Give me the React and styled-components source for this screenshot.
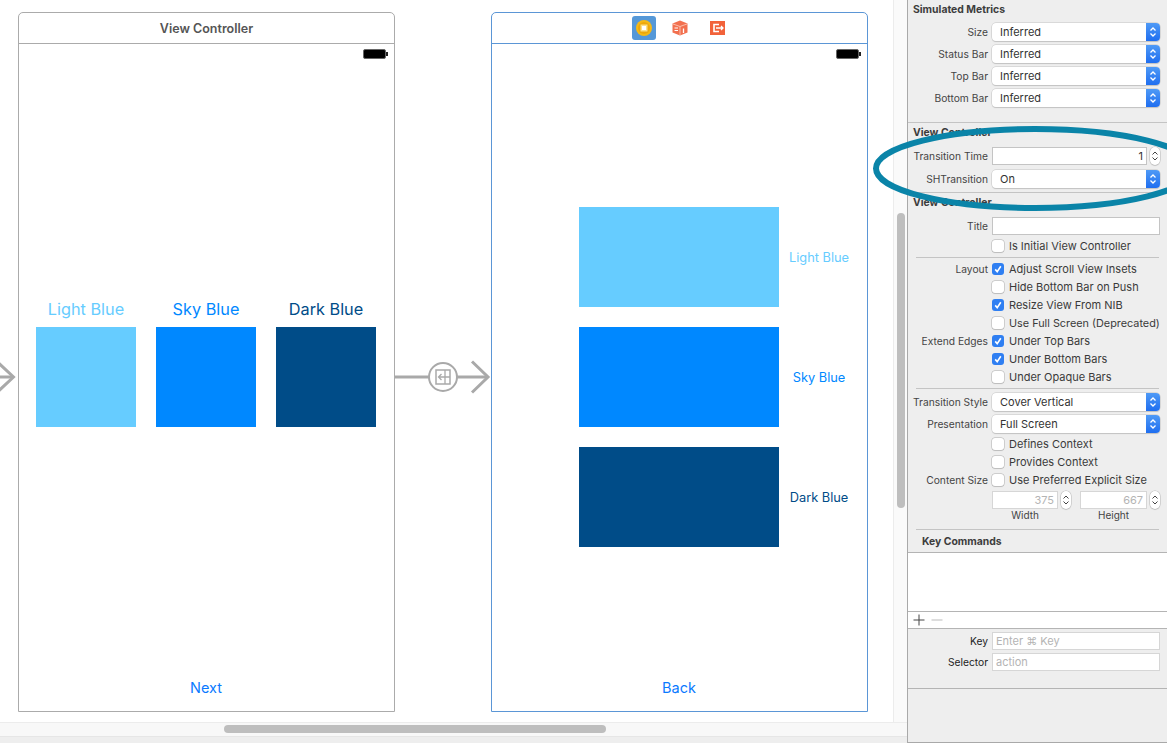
import React from 'react';
import styled, { createGlobalStyle } from 'styled-components';

const Global = createGlobalStyle`
  html, body { margin: 0; padding: 0; background: #fff; overflow: hidden; }
  body { font-family: Inter, "Liberation Sans", sans-serif; }
`;

const Page = styled.div`
  position: relative;
  width: 1167px;
  height: 743px;
  display: flex;
  overflow: hidden;
`;

const Workspace = styled.div`
  width: 907px;
  display: flex;
  flex-direction: column;
`;

const CanvasRow = styled.div`
  display: flex;
  height: 722px;
`;

const Canvas = styled.div`
  width: 893px;
  display: flex;
  align-items: flex-start;
  padding-top: 12px;
  box-sizing: border-box;
  overflow: hidden;
`;

const VScrollTrack = styled.div`
  width: 14px;
  background: #fafafa;
  border-left: 1px solid #ececec;
  padding-top: 213px;
  box-sizing: border-box;
  display: flex;
  justify-content: center;
`;

const VThumb = styled.div`
  width: 8px;
  height: 295px;
  border-radius: 4px;
  background: #bebebe;
`;

const HScrollTrack = styled.div`
  height: 15px;
  background: #f8f8f8;
  border-top: 1px solid #ececec;
  border-bottom: 1px solid #e6e6e6;
  box-sizing: border-box;
  padding: 2px 0 0 224px;
`;

const HThumb = styled.div`
  width: 382px;
  height: 8px;
  border-radius: 4px;
  background: #bebebe;
`;

const BottomStrip = styled.div`
  flex: 1;
  background: #eeeeee;
`;

const EntryArrow = styled.div`
  width: 18px;
  height: 700px;
  display: flex;
  align-items: center;
  padding-top: 30px;
  box-sizing: border-box;
  flex-shrink: 0;
`;

const Scene = styled.div`
  width: 377px;
  height: 700px;
  flex-shrink: 0;
  box-sizing: border-box;
  border: 1px solid ${p => (p.$selected ? '#5b96d6' : '#ababab')};
  border-radius: 5px 5px 0 0;
  display: flex;
  flex-direction: column;
  background: #fff;
`;

const SceneBar = styled.div`
  height: 30px;
  flex-shrink: 0;
  border-bottom: 1px solid ${p => (p.$selected ? '#5b96d6' : '#ababab')};
  display: flex;
  align-items: center;
  justify-content: center;
  gap: 12px;
  font-size: 12.5px;
  font-weight: 600;
  color: #555;
`;

const DockIcon = styled.div`
  width: 24px;
  height: 24px;
  border-radius: 3px;
  display: flex;
  align-items: center;
  justify-content: center;
  background: ${p => (p.$active ? '#5598d8' : 'transparent')};
`;

const StatusRow = styled.div`
  height: 20px;
  display: flex;
  justify-content: flex-end;
  align-items: center;
  padding-right: 7px;
`;

const Battery = styled.div`
  position: relative;
  width: 23px;
  height: 10px;
  box-sizing: border-box;
  border: 1px solid #666;
  border-radius: 2px;
  background: #000;
  margin-right: 1px;
  &::after {
    content: '';
    position: absolute;
    right: -3px;
    top: 2px;
    width: 2px;
    height: 4px;
    background: #222;
  }
`;

const SceneBody = styled.div`
  flex: 1;
  display: flex;
  flex-direction: column;
`;

const SwatchRow = styled.div`
  margin-top: 234px;
  display: flex;
  padding-left: 17px;
  gap: 20px;
`;

const SwatchColumn = styled.div`
  width: 100px;
  display: flex;
  flex-direction: column;
  align-items: center;
  gap: 7px;
`;

const SwatchName = styled.div`
  height: 22px;
  line-height: 22px;
  font-size: 16.3px;
  white-space: nowrap;
  color: ${p => p.$color};
`;

const Swatch = styled.div`
  width: 100px;
  height: 100px;
  background: ${p => p.$color};
`;

const StackList = styled.div`
  margin-top: 143px;
  display: flex;
  flex-direction: column;
  gap: 20px;
  padding-left: 87px;
`;

const StackRow = styled.div`
  display: flex;
  align-items: center;
`;

const StackBlock = styled.div`
  width: 200px;
  height: 100px;
  background: ${p => p.$color};
`;

const StackName = styled.div`
  width: 80px;
  text-align: center;
  font-size: 12.8px;
  white-space: nowrap;
  color: ${p => p.$color};
`;

const BarButton = styled.div`
  margin-top: auto;
  height: 45px;
  line-height: 44px;
  text-align: center;
  padding-right: 1px;
  font-size: 14.5px;
  color: #0a7aff;
`;

const Segue = styled.div`
  width: 96px;
  height: 700px;
  flex-shrink: 0;
  display: flex;
  align-items: center;
  padding-top: 30px;
  box-sizing: border-box;
`;

const Inspector = styled.div`
  width: 260px;
  height: 743px;
  box-sizing: border-box;
  background: #eeeeee;
  border-left: 1px solid #a9a9a9;
  border-bottom: 1px solid #a9a9a9;
  display: flex;
  flex-direction: column;
  color: #3a3a3a;
  font-size: 11px;
`;

const Heading = styled.div`
  font-size: 10.4px;
  font-weight: 700;
  color: #3d3d3d;
  height: ${p => p.$height || 14}px;
  line-height: ${p => p.$height || 14}px;
  margin-top: ${p => p.$top || 0}px;
  padding-left: ${p => p.$indent || 5}px;
  white-space: nowrap;
`;

const Divider = styled.div`
  height: 1px;
  flex-shrink: 0;
  background: #c4c4c4;
  margin: ${p => p.$before || 0}px ${p => p.$inset || 0}px ${p => p.$after || 0}px ${p => (p.$inset ? 8 : 0)}px;
`;

const Row = styled.div`
  display: flex;
  align-items: center;
  height: ${p => p.$height}px;
  margin-top: ${p => p.$top || 0}px;
  margin-left: ${p => p.$left || 0}px;
  flex-shrink: 0;
`;

const Label = styled.div`
  width: 80px;
  margin-right: 4px;
  white-space: nowrap;
  font-size: 10.25px;
  color: ${p => (p.$dark ? '#222' : '#444')};
  display: flex;
  justify-content: flex-end;
`;

const Popup = styled.div`
  width: 168px;
  height: 18px;
  box-sizing: border-box;
  display: flex;
  align-items: center;
  background: #fff;
  border-radius: 4px;
  box-shadow: 0 0 0 .5px #c4c4c4, 0 1px 1px rgba(0,0,0,.18);
  padding-left: 8px;
  position: relative;
  color: #333;
  overflow: hidden;
`;

const PopupArrows = styled.div`
  position: absolute;
  right: 0;
  top: 0;
  bottom: 0;
  width: 14px;
  background: linear-gradient(#4f9af6, #1f6ef0);
  display: flex;
  align-items: center;
  justify-content: center;
`;

const Field = styled.div`
  width: ${p => p.$width}px;
  height: 18px;
  box-sizing: border-box;
  background: #fff;
  border: 1px solid ${p => (p.$soft ? '#d6d6d6' : '#c4c4c4')};
  display: flex;
  align-items: center;
  justify-content: ${p => (p.$right ? 'flex-end' : 'flex-start')};
  padding: 0 3px;
  color: ${p => (p.$muted ? '#b4b4b4' : '#333')};
`;

const Stepper = styled.div`
  width: 10px;
  height: 18px;
  margin-left: 3px;
  box-sizing: border-box;
  background: #fff;
  border-radius: 5px;
  box-shadow: 0 0 0 .5px #b8b8b8, 0 1px 1px rgba(0,0,0,.12);
  display: flex;
  align-items: center;
  justify-content: center;
`;

const Check = styled.div`
  width: 12px;
  height: 12px;
  box-sizing: border-box;
  border-radius: 3px;
  flex-shrink: 0;
  margin-right: 5px;
  display: flex;
  align-items: center;
  justify-content: center;
  background: ${p => (p.$on ? '#2f7ff2' : '#fff')};
  box-shadow: ${p => (p.$on ? 'none' : '0 0 0 .5px #b0b0b0, 0 .5px 1px rgba(0,0,0,.15)')};
`;

const CheckText = styled.div`
  white-space: nowrap;
  color: #3a3a3a;
  font-size: ${p => p.$size || 11}px;
`;

const Caption = styled.div`
  width: ${p => p.$width}px;
  margin-left: ${p => p.$left || 0}px;
  text-align: center;
  white-space: nowrap;
  color: #444;
  font-size: 10px;
`;

const KeyTable = styled.div`
  height: 58px;
  flex-shrink: 0;
  background: #fff;
  border-top: 1px solid #b4b4b4;
  border-bottom: 1px solid #b4b4b4;
`;

const KeyTools = styled.div`
  height: 16px;
  flex-shrink: 0;
  background: #fff;
  border-bottom: 1px solid #b4b4b4;
  display: flex;
  align-items: center;
  gap: 6px;
  padding-left: 5px;
`;

const FillPanel = styled.div`
  flex: 1;
  border-top: 1px solid #b4b4b4;
  margin-top: 18px;
`;

const Annotation = styled.svg`
  position: absolute;
  left: 0;
  top: 0;
  pointer-events: none;
`;

const LIGHT = '#66ccff';
const SKY = '#0088ff';
const DARK = '#004c88';

const colors = [
  { name: 'Light Blue', color: LIGHT },
  { name: 'Sky Blue', color: SKY },
  { name: 'Dark Blue', color: DARK },
];

function Chevrons({ color = '#fff', weight = 1.3 }) {
  return (
    <svg width="8" height="12" viewBox="0 0 8 12" fill="none" stroke={color} strokeWidth={weight}>
      <path d="M1.5 4.5 L4 2 L6.5 4.5" />
      <path d="M1.5 7.5 L4 10 L6.5 7.5" />
    </svg>
  );
}

function Arrowhead() {
  return (
    <svg width="18" height="36" viewBox="0 0 18 36" fill="none" stroke="#a9a9a9" strokeWidth="3" style={{ overflow: 'visible' }}>
      <path d="M-16 18 H13" />
      <path d="M-3 2.5 L13.5 18 L-3 33.5" />
    </svg>
  );
}

function SegueLink() {
  return (
    <svg width="96" height="36" viewBox="0 0 96 36" fill="none" stroke="#a9a9a9">
      <path d="M0 18 H34 M62 18 H92" strokeWidth="3" />
      <circle cx="48" cy="18" r="14" strokeWidth="2" fill="#fff" />
      <rect x="41" y="11" width="14" height="14" strokeWidth="1.5" />
      <path d="M50 11 V25 M50 18 H55 M50 18 H43.5 M46.5 15 L43.5 18 L46.5 21" strokeWidth="1.3" />
      <path d="M77 2.5 L93 18 L77 33.5" strokeWidth="3" />
    </svg>
  );
}

function ControllerIcon() {
  return (
    <svg width="18" height="18" viewBox="0 0 18 18">
      <circle cx="9" cy="9" r="8" fill="#f6b915" />
      <circle cx="9" cy="9" r="6" fill="#eda80b" />
      <rect x="5.5" y="5.5" width="7" height="7" fill="#fbe08a" />
      <rect x="7" y="7" width="4" height="4" fill="#fff" />
    </svg>
  );
}

function CubeIcon() {
  return (
    <svg width="16" height="16" viewBox="0 0 16 16">
      <path d="M8 0.5 L15.5 3.5 V12.5 L8 15.5 L0.5 12.5 V3.5 Z" fill="#f2704f" />
      <path d="M1 4 L8 6.5 L15 4 M8 6.5 V15" stroke="#fbd0c2" strokeWidth="0.8" fill="none" />
      <path d="M2.5 8 H6 M2.5 10.5 H6" stroke="#fff" strokeWidth="1" />
      <path d="M11.5 8.5 V13" stroke="#fff" strokeWidth="1.3" />
    </svg>
  );
}

function ExitIcon() {
  return (
    <svg width="18" height="14" viewBox="-3 0 18 14">
      <rect width="15" height="14" fill="#f2623a" />
      <path d="M9 3.5 H4 V10.5 H9" stroke="#fff" strokeWidth="1.6" fill="none" />
      <path d="M6 7 H13 M11 5 L13 7 L11 9" stroke="#fff" strokeWidth="1.3" fill="none" />
    </svg>
  );
}

function CheckMark() {
  return (
    <svg width="10" height="10" viewBox="0 0 10 10" fill="none" stroke="#fff" strokeWidth="1.6">
      <path d="M2.2 5.4 L4.2 7.6 L7.8 2.2" />
    </svg>
  );
}

const Select = ({ label, value, height = 22 }) => (
  <Row $height={height}>
    <Label>{label}</Label>
    <Popup>
      {value}
      <PopupArrows><Chevrons /></PopupArrows>
    </Popup>
  </Row>
);

const Option = ({ label, text, on, size, height = 18 }) => (
  <Row $height={height}>
    <Label>{label}</Label>
    <Check $on={on}>{on && <CheckMark />}</Check>
    <CheckText $size={size}>{text}</CheckText>
  </Row>
);

export default function App() {
  return (
    <Page>
      <Global />
      <Workspace>
        <CanvasRow>
          <Canvas>
            <EntryArrow><Arrowhead /></EntryArrow>
            <Scene>
              <SceneBar>View Controller</SceneBar>
              <StatusRow><Battery /></StatusRow>
              <SceneBody>
                <SwatchRow>
                  {colors.map(c => (
                    <SwatchColumn key={c.name}>
                      <SwatchName $color={c.color}>{c.name}</SwatchName>
                      <Swatch $color={c.color} />
                    </SwatchColumn>
                  ))}
                </SwatchRow>
                <BarButton>Next</BarButton>
              </SceneBody>
            </Scene>
            <Segue><SegueLink /></Segue>
            <Scene $selected>
              <SceneBar $selected>
                <DockIcon $active><ControllerIcon /></DockIcon>
                <DockIcon><CubeIcon /></DockIcon>
                <DockIcon><ExitIcon /></DockIcon>
              </SceneBar>
              <StatusRow><Battery /></StatusRow>
              <SceneBody>
                <StackList>
                  {colors.map(c => (
                    <StackRow key={c.name}>
                      <StackBlock $color={c.color} />
                      <StackName $color={c.color}>{c.name}</StackName>
                    </StackRow>
                  ))}
                </StackList>
                <BarButton>Back</BarButton>
              </SceneBody>
            </Scene>
          </Canvas>
          <VScrollTrack><VThumb /></VScrollTrack>
        </CanvasRow>
        <HScrollTrack><HThumb /></HScrollTrack>
        <BottomStrip />
      </Workspace>

      <Inspector>
        <Heading $height={19}>Simulated Metrics</Heading>
        <Row $height={2} />
        <Select label="Size" value="Inferred" />
        <Select label="Status Bar" value="Inferred" />
        <Select label="Top Bar" value="Inferred" />
        <Select label="Bottom Bar" value="Inferred" />
        <Divider $before={13} />
        <Heading $height={19}>View Controller</Heading>
        <Row $height={24} $top={2}>
          <Label>Transition Time</Label>
          <Field $width={155} $right>1</Field>
          <Stepper><Chevrons color="#444" weight={1} /></Stepper>
        </Row>
        <Select label="SHTransition" value="On" />
        <Divider $before={2} />
        <Heading $height={19}>View Controller</Heading>
        <Row $height={22} $top={3}>
          <Label>Title</Label>
          <Field $width={168} />
        </Row>
        <Option text="Is Initial View Controller" />
        <Divider $inset={8} $before={2} $after={2} />
        <Option label="Layout" text="Adjust Scroll View Insets" on />
        <Option text="Hide Bottom Bar on Push" />
        <Option text="Resize View From NIB" on />
        <Option text="Use Full Screen (Deprecated)" size={10.85} />
        <Option label="Extend Edges" text="Under Top Bars" on />
        <Option text="Under Bottom Bars" on />
        <Option text="Under Opaque Bars" />
        <Divider $inset={8} $before={2} $after={2} />
        <Select label="Transition Style" value="Cover Vertical" />
        <Select label="Presentation" value="Full Screen" />
        <Option text="Defines Context" />
        <Option text="Provides Context" />
        <Option label="Content Size" text="Use Preferred Explicit Size" />
        <Row $height={22}>
          <Label />
          <Field $width={66} $right $soft $muted>375</Field>
          <Stepper><Chevrons color="#444" weight={1} /></Stepper>
          <Row $height={22} $left={9}>
            <Field $width={67} $right $soft $muted>667</Field>
            <Stepper><Chevrons color="#444" weight={1} /></Stepper>
          </Row>
        </Row>
        <Row $height={8}>
          <Label />
          <Caption $width={66}>Width</Caption>
          <Caption $width={67} $left={22}>Height</Caption>
        </Row>
        <Divider $inset={8} $before={10} />
        <Heading $height={22} $top={1} $indent={14} style={{ marginBottom: -1 }}>Key Commands</Heading>
        <KeyTable />
        <KeyTools>
          <svg width="12" height="12" viewBox="0 0 12 12" stroke="#444" strokeWidth="1"><path d="M6 0.5 V11.5 M0.5 6 H11.5" /></svg>
          <svg width="12" height="12" viewBox="0 0 12 12" stroke="#bbb" strokeWidth="1"><path d="M0.5 6 H11.5" /></svg>
        </KeyTools>
        <Row $height={18} $top={3}>
          <Label $dark>Key</Label>
          <Field $width={168} $soft $muted>Enter ⌘ Key</Field>
        </Row>
        <Row $height={18} $top={3}>
          <Label $dark>Selector</Label>
          <Field $width={168} $soft $muted>action</Field>
        </Row>
        <FillPanel style={{ marginTop: 17 }} />
      </Inspector>

      <Annotation width="1167" height="743" viewBox="0 0 1167 743">
        <ellipse cx="1035" cy="168.5" rx="159" ry="39.5" fill="none" stroke="#0a84a8" strokeWidth="6" />
      </Annotation>
    </Page>
  );
}
